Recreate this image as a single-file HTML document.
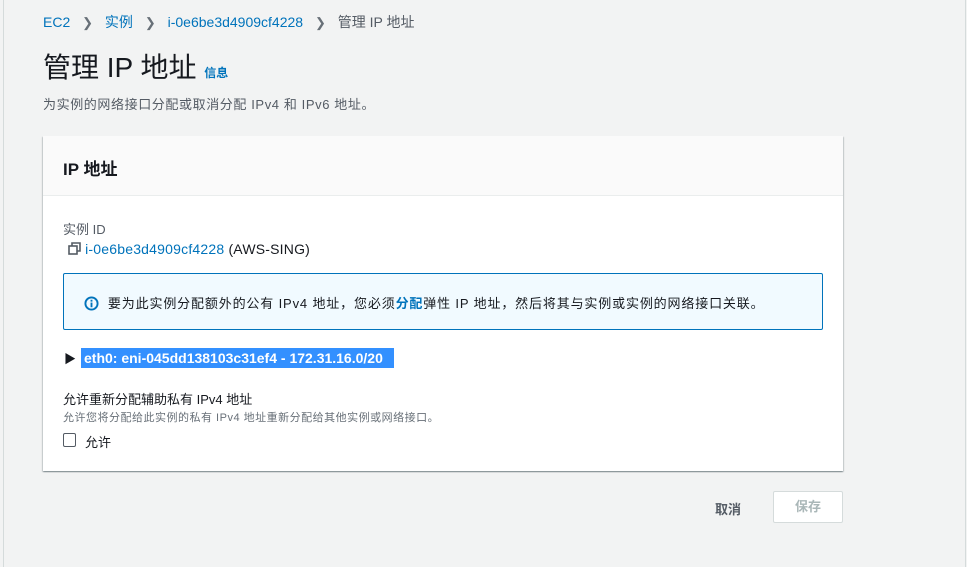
<!DOCTYPE html>
<html><head><meta charset="utf-8"><style>
*{box-sizing:border-box;margin:0;padding:0}
body{width:967px;height:567px;background:#f2f3f3;font-family:"Liberation Sans","Noto Sans CJK SC",sans-serif;color:#16191f;position:relative;overflow:hidden;font-size:14px}
.lb{position:absolute;left:3px;top:0;width:1px;height:567px;background:#d5dbdb}
.rb{position:absolute;left:965px;top:0;width:1px;height:567px;background:#d5dbdb}
.abs{position:absolute;white-space:nowrap}
.link{color:#0073bb}
.card{position:absolute;left:43px;top:136px;width:800px;height:335px;background:#fff;box-shadow:0 1px 1px 0 rgba(0,28,36,.3),1px 1px 1px 0 rgba(0,28,36,.15),-1px 1px 1px 0 rgba(0,28,36,.15)}
.ch{position:absolute;left:0;top:0;width:800px;height:60px;background:#fafafa;border-bottom:1px solid #eaeded}
.sep{margin:0 8px;color:#687078;font-size:13px}
</style></head><body>
<div class="lb"></div><div class="rb"></div>
<div class="abs" style="left:43px;top:12px;font-size:14px;color:#545b64"><span class="link">EC2</span> <span class="sep">&#x276F;</span> <span class="link">实例</span> <span class="sep">&#x276F;</span> <span class="link">i-0e6be3d4909cf4228</span> <span class="sep">&#x276F;</span> 管理 IP 地址</div>
<div class="abs" style="left:43px;top:50px;font-size:28px;color:#16191f;line-height:36px">管理 IP 地址 <span style="font-size:12px;font-weight:bold;color:#0073bb">信息</span></div>
<div class="abs" style="left:43px;top:94px;font-size:13px;letter-spacing:0.6px;color:#545b64">为实例的网络接口分配或取消分配 IPv4 和 IPv6 地址。</div>
<div class="card">
<div class="ch"><div class="abs" style="left:20px;top:19px;font-size:17px;font-weight:bold">IP 地址</div></div>
<div class="abs" style="left:20px;top:83px;font-size:13px;color:#545b64">实例 ID</div>
<div class="abs" style="left:25px;top:105px;font-size:14px;letter-spacing:0.2px">
<svg width="13" height="13" viewBox="0 0 13 13" style="vertical-align:-1px"><rect x="1" y="4" width="8" height="8" fill="none" stroke="#545b64" stroke-width="1.6"/><path d="M4 4V1h8v8H9" fill="none" stroke="#545b64" stroke-width="1.6"/></svg>
<span class="link">i-0e6be3d4909cf4228</span> (AWS-SING)</div>
<div style="position:absolute;left:20px;top:137px;width:760px;height:57px;background:#f1faff;border:1px solid #0073bb;border-radius:2px"></div>
<div class="abs" style="left:41px;top:157px;font-size:13px;letter-spacing:0.85px">
<svg width="15" height="15" viewBox="0 0 16 16" style="vertical-align:-3px"><circle cx="8" cy="8" r="6.5" fill="none" stroke="#0073bb" stroke-width="2"/><rect x="7" y="7" width="2" height="5" fill="#0073bb"/><rect x="7" y="4" width="2" height="2" fill="#0073bb"/></svg>
&nbsp;要为此实例分配额外的公有 IPv4 地址，您必须<b class="link">分配</b>弹性 IP 地址，然后将其与实例或实例的网络接口关联。</div>
<div class="abs" style="left:21px;top:214px;font-size:12px">&#9654;</div>
<div class="abs" style="left:38px;top:212px;background:#3390ff;color:#fff;font-weight:bold;font-size:14px;height:20px;line-height:20px;padding-left:3px;width:313px">eth0: eni-045dd138103c31ef4 - 172.31.16.0/20</div>
<div class="abs" style="left:20px;top:253px;font-size:13px">允许重新分配辅助私有 IPv4 地址</div>
<div class="abs" style="left:20px;top:273px;font-size:11px;letter-spacing:0.5px;color:#687078">允许您将分配给此实例的私有 IPv4 地址重新分配给其他实例或网络接口。</div>
<div style="position:absolute;left:20px;top:297px;width:13px;height:14px;border:1.5px solid #545b64;border-radius:2px"></div>
<div class="abs" style="left:42px;top:296px;font-size:13px">允许</div>
</div>
<div class="abs" style="left:715px;top:499px;font-size:13px;font-weight:bold;color:#545b64">取消</div>
<div style="position:absolute;left:773px;top:491px;width:70px;height:32px;background:#fff;border:1px solid #d5dbdb;border-radius:2px;color:#aab7b8;font-weight:bold;font-size:13px;text-align:center;line-height:30px">保存</div>
</body></html>
